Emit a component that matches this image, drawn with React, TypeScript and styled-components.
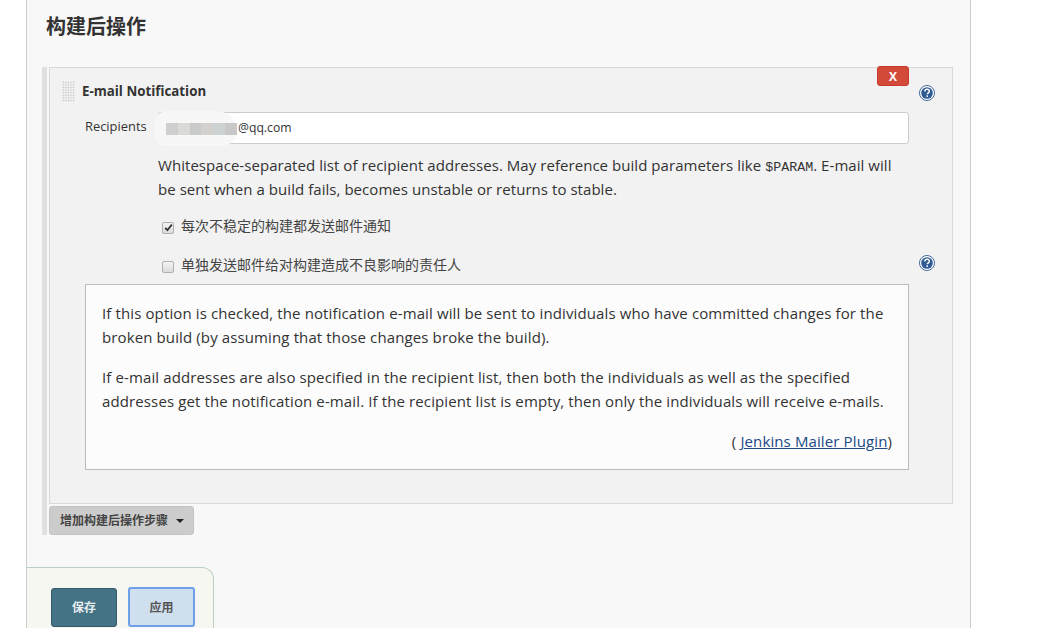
import React from 'react';
import styled, { createGlobalStyle } from 'styled-components';

const CJK = '"Noto Sans CJK SC", sans-serif';

const GlobalStyle = createGlobalStyle`
  html, body {
    margin: 0;
    padding: 0;
    height: 100%;
    overflow: hidden;
    background: #fff;
    color: #333;
    font-family: "Open Sans", ${CJK};
  }
`;

const Page = styled.div`
  width: 945px;
  height: 628px;
  margin-left: 26px;
  box-sizing: border-box;
  border-left: 1px solid #ccc;
  border-right: 1px solid #ccc;
  background: #f8f8f8;
  display: flex;
  flex-direction: column;
  overflow: hidden;
`;

const Heading = styled.h2`
  margin: 0;
  flex: none;
  height: 67px;
  box-sizing: border-box;
  padding: 12px 0 0 19px;
  font-size: 20px;
  line-height: 30px;
  font-weight: 700;
  color: #333;
`;

const Section = styled.div`
  flex: none;
  margin-left: 15px;
  width: 910px;
  height: 468px;
  border-left: 5px solid #e0e0e0;
  padding-left: 2px;
  box-sizing: border-box;
`;

const Block = styled.div`
  position: relative;
  width: 904px;
  height: 437px;
  box-sizing: border-box;
  border: 1px solid #d9d9d9;
  background: #f2f2f2;
  padding: 14px 0 0 12px;
`;

const BlockHeader = styled.div`
  display: flex;
  align-items: center;
  height: 18px;
  gap: 7px;
`;

const Grip = styled.div`
  width: 13px;
  height: 21px;
  background-image: radial-gradient(#c4c4c4 0.8px, transparent 0.9px);
  background-size: 2.6px 2.6px;
`;

const BlockTitle = styled.span`
  font-size: 13.3px;
  font-weight: 700;
  color: #333;
`;

const DeleteButton = styled.button`
  position: absolute;
  top: -2px;
  left: 827px;
  width: 32px;
  height: 20px;
  padding: 0;
  border: 1px solid #c9392c;
  border-radius: 3px;
  background: #d34a3a;
  color: #fff;
  font-family: "Open Sans", sans-serif;
  font-size: 12px;
  font-weight: 700;
`;

const HelpIcon = styled.svg<{ $top: number }>`
  position: absolute;
  left: 869px;
  top: ${(p) => p.$top}px;
  width: 16px;
  height: 16px;
`;

const FieldRow = styled.div`
  display: flex;
  align-items: flex-start;
  margin-top: 12px;
`;

const FieldLabel = styled.label`
  width: 96px;
  padding: 6px 0 0 23px;
  box-sizing: border-box;
  font-size: 12.9px;
  line-height: 17px;
  color: #333;
`;

const InputShell = styled.div`
  position: relative;
  width: 751px;
  height: 32px;
  box-sizing: border-box;
  border: 1px solid #ccc;
  border-radius: 3px;
  background: #fff;
  padding: 6px 0 0 79px;
  font-size: 12.2px;
  line-height: 17px;
  color: #333;
`;

const Smudge = styled.div`
  position: absolute;
  left: -4px;
  top: -2px;
  width: 82px;
  height: 35px;
  background: #f7f7f7;
  border-radius: 14px 24px 18px 12px;
  display: flex;
  align-items: center;
  padding-left: 11px;
  box-sizing: border-box;
`;

const Pixel = styled.span<{ $c: string }>`
  width: 12px;
  height: 12px;
  background: ${(p) => p.$c};
`;

const Description = styled.p`
  margin: 9px 0 0 96px;
  width: 745px;
  font-size: 15px;
  letter-spacing: 0.05px;
  line-height: 24px;
  color: #333;
`;

const Mono = styled.code`
  font-family: "Liberation Mono", "DejaVu Sans Mono", monospace;
  font-size: 13.33px;
  letter-spacing: 0;
  line-height: 0;
`;

const CheckRow = styled.label<{ $top: number }>`
  display: flex;
  align-items: center;
  gap: 7px;
  margin: ${(p) => p.$top}px 0 0 100px;
  height: 18px;
  font-size: 14px;
  line-height: 18px;
  color: #444;
`;

const Box = styled.span`
  width: 12px;
  height: 12px;
  margin-top: 3px;
  box-sizing: border-box;
  border: 1px solid #b0b0b0;
  border-radius: 2px;
  background: linear-gradient(#f4f4f4, #dcdcdc);
  display: flex;
  align-items: center;
  justify-content: center;
`;

const HelpPanel = styled.div`
  margin: 10px 0 0 23px;
  width: 824px;
  height: 186px;
  box-sizing: border-box;
  border: 1px solid #bbb;
  background: #fcfcfc;
  padding: 16px 16px 0;
  font-size: 15px;
  letter-spacing: 0.12px;
  line-height: 24px;
  color: #333;
`;

const HelpText = styled.p`
  margin: 0 0 16px;
  white-space: nowrap;
`;

const PluginLine = styled.div`
  text-align: right;
  margin-right: 0;
`;

const PluginLink = styled.a`
  color: #204a87;
  text-decoration: underline;
`;

const AddButton = styled.button`
  margin-top: 2px;
  width: 145px;
  height: 29px;
  box-sizing: border-box;
  border: 1px solid #c4c4c4;
  border-radius: 3px;
  background: #ccc;
  color: #444;
  font-family: ${CJK};
  font-size: 12px;
  font-weight: 700;
  display: flex;
  align-items: center;
  padding: 0 0 2px 10px;
  gap: 8px;
`;

const Caret = styled.span`
  width: 0;
  height: 0;
  margin-top: 2px;
  border-left: 4px solid transparent;
  border-right: 4px solid transparent;
  border-top: 4px solid #222;
`;

const Footer = styled.div`
  flex: none;
  margin-top: 32px;
  width: 187px;
  height: 80px;
  box-sizing: border-box;
  border: 1px solid #b9d0c0;
  border-left: none;
  border-bottom: none;
  border-top-right-radius: 12px;
  background: #f5f7f0;
  padding: 20px 0 0 24px;
  display: flex;
  gap: 11px;
  align-items: flex-start;
`;

const SaveButton = styled.button`
  width: 66px;
  height: 39px;
  box-sizing: border-box;
  border: 1px solid #34586a;
  border-radius: 3px;
  background: #447386;
  color: #e8eef0;
  font-family: ${CJK};
  font-size: 12px;
  font-weight: 700;
  padding: 0 0 2px;
`;

const ApplyButton = styled.button`
  width: 67px;
  height: 40px;
  box-sizing: border-box;
  border: 2px solid #6ea0ea;
  border-radius: 3px;
  background: #cfdfee;
  color: #555;
  font-family: ${CJK};
  font-size: 12px;
  font-weight: 700;
  padding: 0 0 2px;
  margin-top: -1px;
`;

function Help({ top }: { top: number }) {
  return (
    <HelpIcon $top={top} viewBox="0 0 17 17">
      <circle cx="8.5" cy="8.5" r="8" fill="#fff" stroke="#3a6298" strokeWidth="1" />
      <circle cx="8.5" cy="8.5" r="6.2" fill="#2f5a94" />
      <path
        d="M6.2 6.8c0-1.4 1-2.2 2.4-2.2s2.4.8 2.4 2c0 1.8-2.2 1.7-2.2 3.3"
        fill="none"
        stroke="#fff"
        strokeWidth="1.5"
      />
      <rect x="7.9" y="11" width="1.6" height="1.7" fill="#fff" />
    </HelpIcon>
  );
}

const smudgeColors = ['#cfcfcf', '#dcdad7', '#c9cbcb', '#d3d0cd', '#cdd2d2', '#c8c8c8'];

export default function App() {
  return (
    <>
      <GlobalStyle />
      <Page>
        <Heading>构建后操作</Heading>
        <Section>
          <Block>
            <DeleteButton>X</DeleteButton>
            <Help top={17} />
            <Help top={187} />
            <BlockHeader>
              <Grip />
              <BlockTitle>E-mail Notification</BlockTitle>
            </BlockHeader>
            <FieldRow>
              <FieldLabel>Recipients</FieldLabel>
              <InputShell>
                <Smudge>
                  {smudgeColors.map((c) => (
                    <Pixel key={c} $c={c} />
                  ))}
                </Smudge>
                @qq.com
              </InputShell>
            </FieldRow>
            <Description>
              Whitespace-separated list of recipient addresses. May reference build parameters like{' '}
              <Mono>$PARAM</Mono>. E-mail will
              <br />
              be sent when a build fails, becomes unstable or returns to stable.
            </Description>
            <CheckRow $top={16}>
              <Box>
                <svg width="9" height="9" viewBox="0 0 9 9">
                  <path d="M1.2 4.8 3.4 7.2 7.8 1.6" fill="none" stroke="#333" strokeWidth="1.8" />
                </svg>
              </Box>
              每次不稳定的构建都发送邮件通知
            </CheckRow>
            <CheckRow $top={21}>
              <Box />
              单独发送邮件给对构建造成不良影响的责任人
            </CheckRow>
            <HelpPanel>
              <HelpText>
                If this option is checked, the notification e-mail will be sent to individuals who have
                committed changes for the
                <br />
                broken build (by assuming that those changes broke the build).
              </HelpText>
              <HelpText>
                If e-mail addresses are also specified in the recipient list, then both the individuals as
                well as the specified
                <br />
                addresses get the notification e-mail. If the recipient list is empty, then only the
                individuals will receive e-mails.
              </HelpText>
              <PluginLine>
                ( <PluginLink href="#">Jenkins Mailer Plugin</PluginLink>)
              </PluginLine>
            </HelpPanel>
          </Block>
          <AddButton>
            增加构建后操作步骤
            <Caret />
          </AddButton>
        </Section>
        <Footer>
          <SaveButton>保存</SaveButton>
          <ApplyButton>应用</ApplyButton>
        </Footer>
      </Page>
    </>
  );
}
